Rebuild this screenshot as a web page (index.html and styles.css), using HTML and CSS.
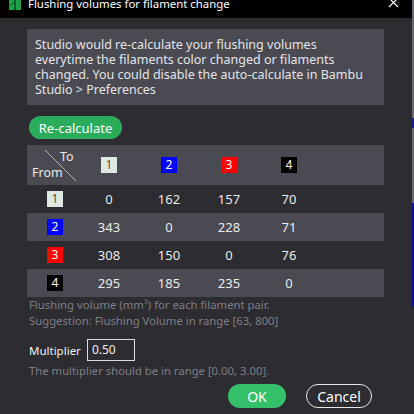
FILE: index.html
```html
<!DOCTYPE html>
<html>
<head>
<meta charset="utf-8">
<link rel="stylesheet" href="styles.css">
</head>
<body>
<div class="window">
  <div class="dialog">
    <div class="titlebar">
      <svg class="logo" width="12" height="10" viewBox="0 0 12 10">
        <rect x="0" y="0" width="12" height="10" fill="#1fa14a"/>
        <path d="M5 0 L7 0 L7 10 L5 10 Z" fill="#0d5e2a"/>
        <path d="M0 5 L5 2 L5 3 L0 6 Z" fill="#0d5e2a"/>
      </svg>
      <span class="title">Flushing volumes for filament change</span>
      <svg class="close" width="12" height="8" viewBox="0 0 12 8">
        <path d="M1 -2 L10 7 M10 -2 L1 7" stroke="#fff" stroke-width="1.2" fill="none"/>
      </svg>
    </div>
    <div class="body">
      <div class="info">Studio would re-calculate your flushing volumes everytime the filaments color changed or filaments changed. You could disable the auto-calculate in Bambu Studio &gt; Preferences</div>
      <div class="btnrow"><span class="btn-green recalc">Re-calculate</span></div>
      <div class="grid">
        <div class="row head">
          <div class="cell corner">
            <span class="to">To</span>
            <span class="from">From</span>
            <svg class="diag" width="32" height="32" viewBox="0 0 32 32"><path d="M0 0 L31 31" stroke="#cfcfcf" stroke-width="0.8"/></svg>
          </div>
          <div class="cell"><span class="chip c1">1</span></div>
          <div class="cell"><span class="chip c2">2</span></div>
          <div class="cell"><span class="chip c3">3</span></div>
          <div class="cell"><span class="chip c4">4</span></div>
        </div>
        <div class="row dark">
          <div class="cell lbl"><span class="chip c1">1</span></div>
          <div class="cell">0</div><div class="cell">162</div><div class="cell">157</div><div class="cell">70</div>
        </div>
        <div class="row light">
          <div class="cell lbl"><span class="chip c2">2</span></div>
          <div class="cell">343</div><div class="cell">0</div><div class="cell">228</div><div class="cell">71</div>
        </div>
        <div class="row dark">
          <div class="cell lbl"><span class="chip c3">3</span></div>
          <div class="cell">308</div><div class="cell">150</div><div class="cell">0</div><div class="cell">76</div>
        </div>
        <div class="row light">
          <div class="cell lbl"><span class="chip c4">4</span></div>
          <div class="cell">295</div><div class="cell">185</div><div class="cell">235</div><div class="cell">0</div>
        </div>
      </div>
      <div class="note">Flushing volume (mm<sup>3</sup>) for each filament pair.<br>Suggestion: Flushing Volume in range [63, 800]</div>
      <div class="multrow">
        <span class="mlabel">Multiplier</span>
        <span class="input">0.50</span>
      </div>
      <div class="note range">The multiplier should be in range [0.00, 3.00].</div>
      <div class="actions">
        <span class="btn-green ok">OK</span>
        <span class="cancel">Cancel</span>
      </div>
    </div>
  </div>
  <div class="edge"></div>
</div>
</body>
</html>
```
FILE: styles.css
```css
html, body {
  margin: 0;
  padding: 0;
  background: #2d2c31;
}
body {
  width: 414px;
  height: 414px;
  overflow: hidden;
  font-family: "Noto Sans", "Open Sans", sans-serif;
  font-size: 12px;
  color: #e6e6e6;
}
.window {
  display: flex;
  height: 414px;
}
.dialog {
  width: 412px;
  display: flex;
  flex-direction: column;
}
.edge {
  width: 2px;
  background: linear-gradient(to bottom, #6a6a70 0, #6a6a70 118px, #1a1a80 118px, #1a1a80 128px, #6a6a70 128px, #6a6a70 203px, #10108a 203px, #10108a 307px, #2d2c31 307px);
}
.titlebar {
  height: 18px;
  background: #000;
  display: flex;
  align-items: flex-start;
  overflow: hidden;
}
.logo {
  margin-left: 9px;
  margin-top: 0;
}
.title {
  margin-left: 7px;
  margin-top: -5px;
  font-size: 11.4px;
  line-height: 18px;
  color: #fff;
}
.close {
  margin-left: auto;
  margin-right: 12px;
}
.body {
  padding: 11px 0 0 27px;
  display: flex;
  flex-direction: column;
}
.info {
  width: 357px;
  box-sizing: border-box;
  background: #4a4a52;
  padding: 8px 8px 8px 8px;
  line-height: 15px;
  font-size: 12.5px;
  color: #e4e4e8;
  height: 76px;
}
.btnrow {
  margin-top: 11px;
  padding-left: 2px;
  display: flex;
}
.btn-green {
  background: #2aac5c;
  color: #fff;
  border-radius: 12px;
  display: inline-flex;
  align-items: center;
  justify-content: center;
}
.recalc {
  width: 93px;
  height: 23px;
  font-size: 13px;
}
.grid {
  margin-top: 6px;
  width: 357px;
  display: flex;
  flex-direction: column;
}
.row {
  display: grid;
  grid-template-columns: 52px 60px 60px 60px 60px 65px;
  height: 28px;
  align-items: center;
  font-size: 13px;
  color: #eaeaea;
}
.row.head {
  height: 40px;
  background: #4a4a52;
}
.row.dark { background: #2d2c31; }
.row.light { background: #4a4a52; }
.cell {
  text-align: center;
  display: flex;
  justify-content: center;
  align-items: center;
}
.cell.lbl {
  padding-left: 4px;
}
.chip {
  width: 16px;
  height: 16px;
  display: inline-flex;
  align-items: center;
  justify-content: center;
  font-size: 12px;
  line-height: 16px;
}
.c1 { background: #dfe9e3; color: #6a4a2a; }
.c2 { background: #0000ff; color: #fff; }
.c3 { background: #ff0000; color: #fff; }
.c4 { background: #000; color: #fff; }
.corner {
  position: relative;
  height: 40px;
}
.corner .to {
  position: absolute;
  left: 33px;
  top: 3px;
  font-size: 12.5px;
}
.corner .from {
  position: absolute;
  left: 5px;
  top: 19px;
  font-size: 12.5px;
}
.corner .diag {
  position: absolute;
  left: 18px;
  top: 5px;
}
.note {
  color: #7e7e85;
  font-size: 11.3px;
  line-height: 16px;
  margin-top: 0px;
  padding-left: 2px;
}
.note sup {
  font-size: 7px;
  line-height: 0;
  vertical-align: 5px;
}
.multrow {
  display: flex;
  align-items: center;
  margin-top: 10px;
  padding-left: 2px;
}
.mlabel {
  font-size: 11.5px;
  color: #f0f0f0;
}
.input {
  margin-left: 6px;
  width: 48px;
  height: 22px;
  box-sizing: border-box;
  border: 1px solid #dcdcdc;
  background: #2d2c31;
  padding-left: 4px;
  font-size: 12px;
  line-height: 20px;
  color: #f0f0f0;
}
.range {
  margin-top: 2px;
}
.actions {
  display: flex;
  margin-top: 5px;
  padding-left: 201px;
  gap: 20px;
}
.ok {
  width: 58px;
  height: 24px;
  font-size: 14px;
  background: #35c06c;
}
.cancel {
  width: 66px;
  height: 24px;
  box-sizing: border-box;
  border: 1px solid #e8e8e8;
  border-radius: 12px;
  display: inline-flex;
  align-items: center;
  justify-content: center;
  font-size: 14px;
  color: #fff;
}
```
